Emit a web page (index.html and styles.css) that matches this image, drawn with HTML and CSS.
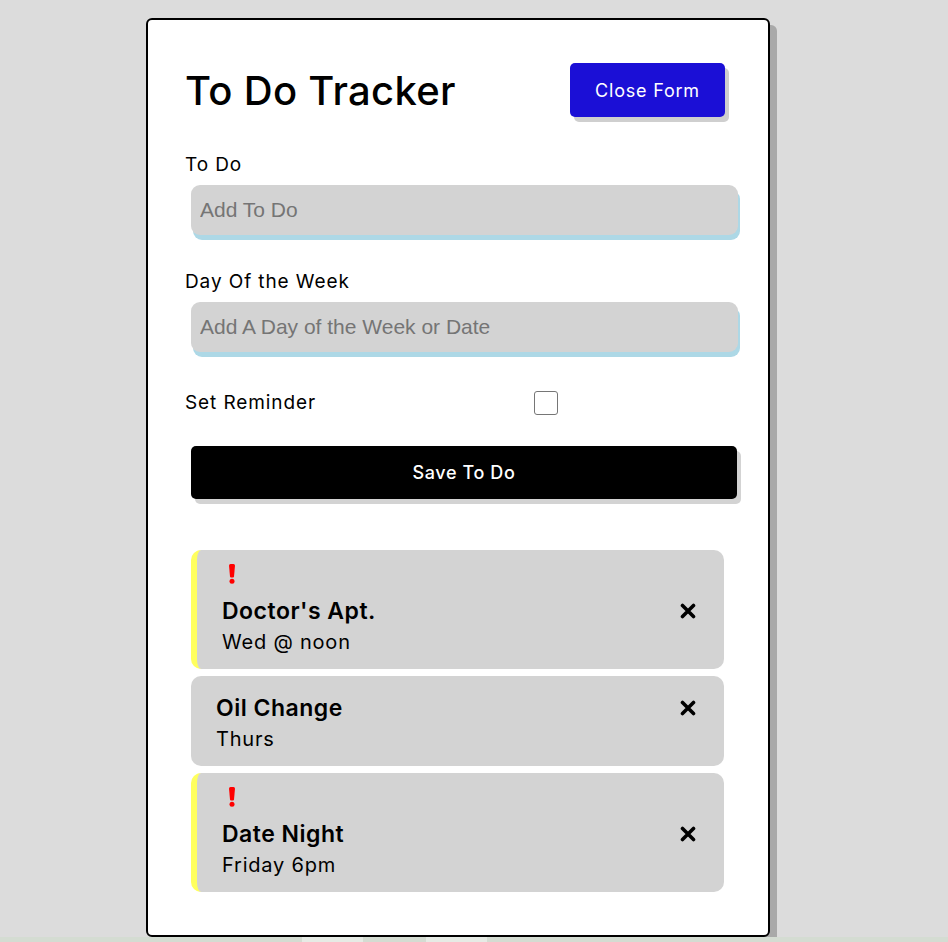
FILE: index.html
```html
<!DOCTYPE html>
<html lang="en">
<head>
  <meta charset="UTF-8" />
  <meta name="viewport" content="width=device-width, initial-scale=1.0"/>
  <title>To Do Tracker</title>
  <link rel="stylesheet" href="styles.css">
</head>
<body>

<div class="container">

  <header class="header">
    <h1>To Do Tracker</h1>
    <button class="btn btn-close">Close Form</button>
  </header>

  <form class="add-form">
    <div class="form-control">
      <label for="text">To Do</label>
      <input type="text" id="text" placeholder="Add To Do">
    </div>

    <div class="form-control">
      <label for="day">Day Of the Week</label>
      <input type="text" id="day" placeholder="Add A Day of the Week or Date">
    </div>

    <div class="form-control form-check">
      <label for="reminder">Set Reminder</label>
      <input type="checkbox" id="reminder">
    </div>

    <button type="submit" class="btn btn-save">Save To Do</button>
  </form>

  <div class="tasks">
    <div class="task reminder">
      <div class="alert">
        <svg width="8" height="20" viewBox="0 0 8 20"><path d="M1 1.5 Q1 0 2.5 0 H5.5 Q7 0 7 1.5 L6 12.5 Q5.9 13.5 5 13.5 H3 Q2.1 13.5 2 12.5 Z" fill="#ff0000"/><circle cx="4" cy="17.3" r="2.5" fill="#ff0000"/></svg>
      </div>
      <h3>Doctor's Apt.
        <svg class="del" width="16" height="16" viewBox="0 0 16 16"><path d="M2.5 2.5 L13.5 13.5 M13.5 2.5 L2.5 13.5" stroke="#000" stroke-width="3.6" stroke-linecap="round"/></svg>
      </h3>
      <p>Wed @ noon</p>
    </div>

    <div class="task">
      <h3>Oil Change
        <svg class="del" width="16" height="16" viewBox="0 0 16 16"><path d="M2.5 2.5 L13.5 13.5 M13.5 2.5 L2.5 13.5" stroke="#000" stroke-width="3.6" stroke-linecap="round"/></svg>
      </h3>
      <p>Thurs</p>
    </div>

    <div class="task reminder">
      <div class="alert">
        <svg width="8" height="20" viewBox="0 0 8 20"><path d="M1 1.5 Q1 0 2.5 0 H5.5 Q7 0 7 1.5 L6 12.5 Q5.9 13.5 5 13.5 H3 Q2.1 13.5 2 12.5 Z" fill="#ff0000"/><circle cx="4" cy="17.3" r="2.5" fill="#ff0000"/></svg>
      </div>
      <h3>Date Night
        <svg class="del" width="16" height="16" viewBox="0 0 16 16"><path d="M2.5 2.5 L13.5 13.5 M13.5 2.5 L2.5 13.5" stroke="#000" stroke-width="3.6" stroke-linecap="round"/></svg>
      </h3>
      <p>Friday 6pm</p>
    </div>
  </div>

</div>

<!-- page strip below the tracker -->
<div class="strip">
  <span class="patch"></span>
  <span class="patch"></span>
</div>

</body>
</html>
```

FILE: styles.css
```css
* {
  box-sizing: border-box;
}

body {
  margin: 0;
  font-family: 'Inter', 'Open Sans', sans-serif;
  background: #dcdcdc;
  color: #000;
  height: 942px;
  overflow: hidden;
}

.container {
  width: 624px;
  height: 919px;
  margin: 18px 0 0 146px;
  padding: 43px 43px 43px 37px;
  background: white;
  border: 2px solid #000;
  border-radius: 6px;
  box-shadow: 7px 7px 0 #a9a9a9;
}

.header {
  display: flex;
  justify-content: space-between;
  align-items: center;
  height: 54px;
  margin-bottom: 36px;
}

.header h1 {
  margin: 0;
  font-size: 40px;
  font-weight: 500;
  letter-spacing: 0.3px;
}

.btn {
  border: none;
  border-radius: 5px;
  color: white;
  font-family: inherit;
  font-size: 18px;
  cursor: pointer;
}

.btn-close {
  width: 155px;
  height: 54px;
  background: #1b0fd6;
  box-shadow: 4px 5px 0 #cfcfcf;
  letter-spacing: 0.8px;
}

.form-control {
  margin-bottom: 35px;
}

.form-control label {
  display: block;
  font-size: 19px;
  line-height: 24px;
  letter-spacing: 0.9px;
  margin-bottom: 8px;
}

.form-control input[type="text"] {
  display: block;
  width: calc(100% + 7px);
  height: 50px;
  margin-left: 6px;
  padding: 0 9px;
  border: none;
  border-radius: 9px;
  background: #d3d3d3;
  box-shadow: 2px 5px 0 #add8e6;
  font-family: 'Liberation Sans', Arial, sans-serif;
  font-size: 21px;
  outline: none;
}

.form-control input::placeholder {
  color: #757575;
}

.form-check {
  display: flex;
  align-items: center;
  height: 24px;
  margin-top: 39px;
  margin-bottom: 31px;
}

.form-check label {
  margin: 0;
  width: 349px;
}

.form-check input {
  appearance: none;
  width: 24px;
  height: 24px;
  margin: 0;
  border: 1px solid #767676;
  border-radius: 3px;
  background: white;
}

.btn-save {
  display: block;
  width: 546px;
  height: 53px;
  margin-left: 6px;
  background: #000;
  font-weight: 500;
  letter-spacing: 0.6px;
  box-shadow: 4px 5px 0 #d3d3d3;
}

.tasks {
  margin-top: 51px;
  width: 533px;
  margin-left: 6px;
}

.task {
  background: #d3d3d3;
  border-radius: 10px;
  padding: 12px 28px 11px 25px;
  margin-bottom: 7px;
}

.task.reminder {
  border-left: 6px solid #ffff5e;
}

.alert {
  height: 24px;
  margin-bottom: 10px;
  padding: 2px 0 0 6px;
}

.alert svg {
  display: block;
}

.task h3 {
  display: flex;
  justify-content: space-between;
  align-items: center;
  margin: 5px 0 0;
  font-size: 23px;
  font-weight: 600;
  letter-spacing: 0.5px;
  line-height: 30px;
}

.task p {
  margin: 0;
  padding-top: 1px;
  font-size: 20px;
  letter-spacing: 0.8px;
  line-height: 31px;
}

.strip {
  display: flex;
  gap: 63px;
  height: 5px;
  padding-left: 302px;
  background: #d4dcd2;
}

.patch {
  width: 61px;
  background: #e6ebe5;
}
```
